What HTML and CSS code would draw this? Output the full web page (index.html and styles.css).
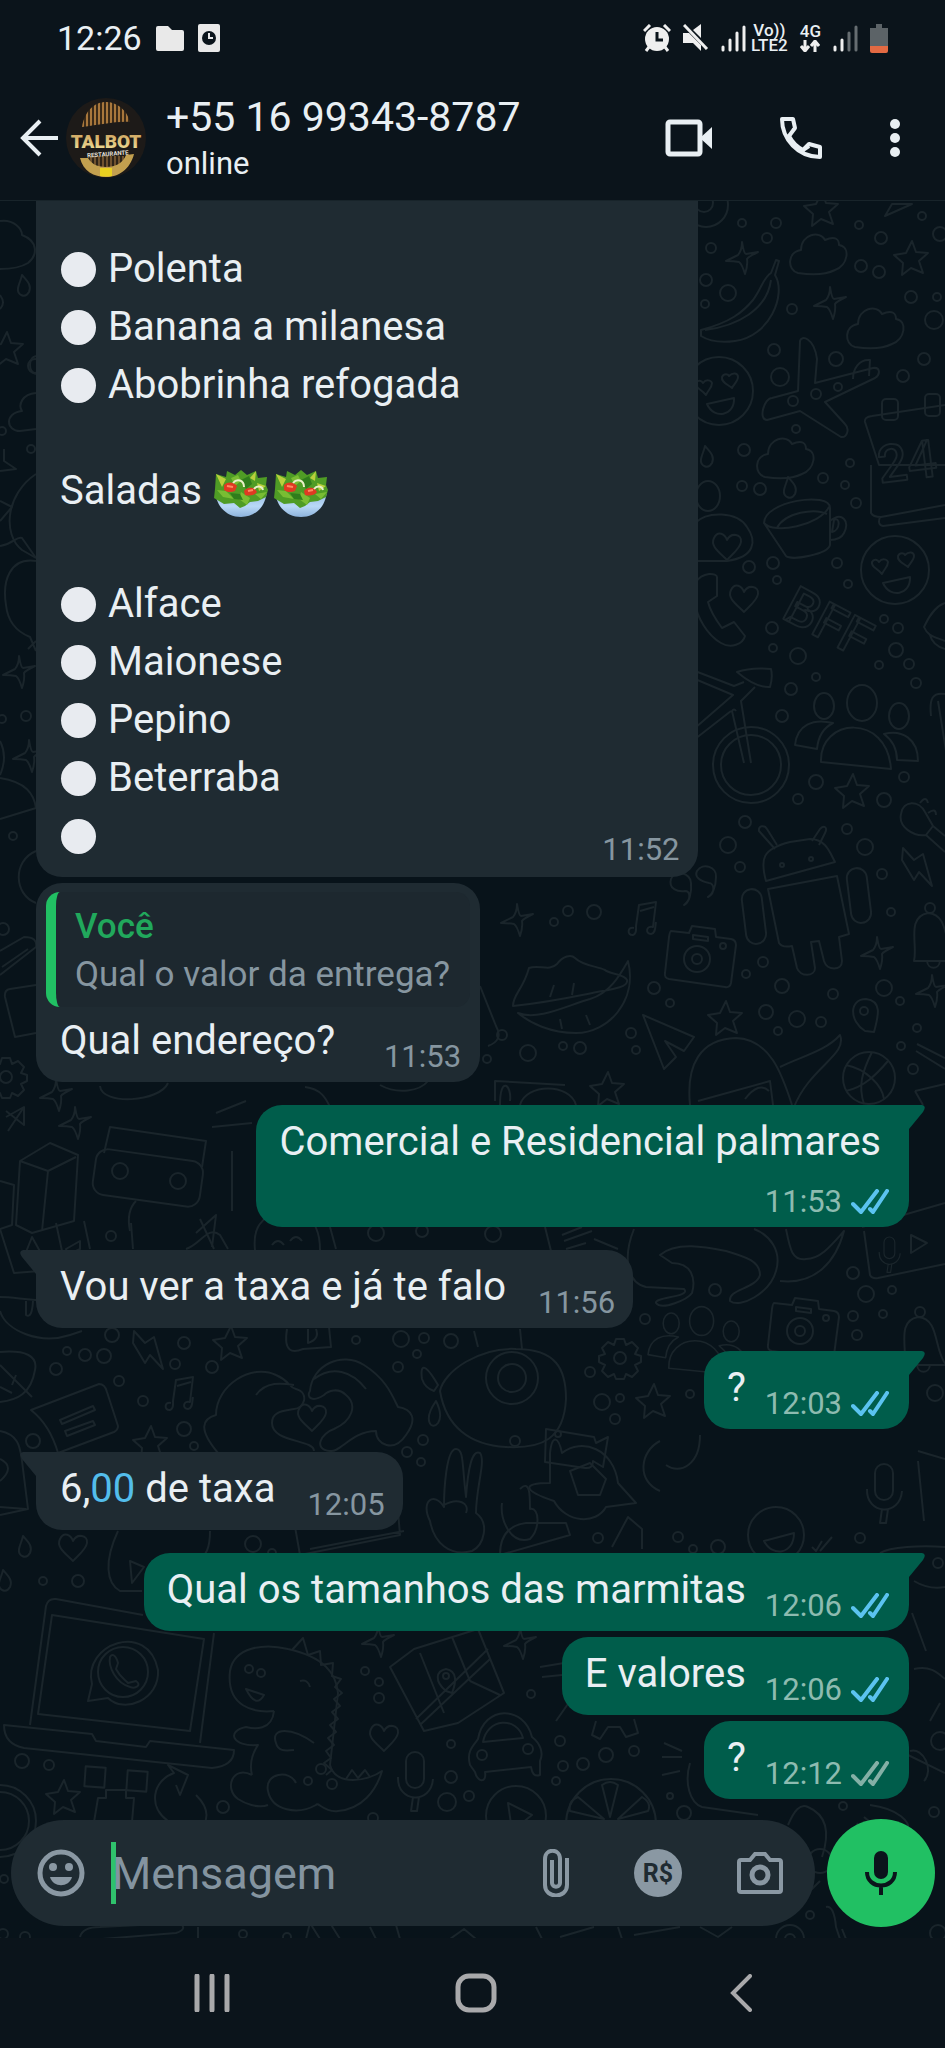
FILE: index.html
```html
<!DOCTYPE html>
<html lang="pt-BR">
<head>
  <meta charset="UTF-8" />
  <meta name="viewport" content="width=device-width, initial-scale=1.0"/>
  <title>+55 16 99343-8787</title>
  <link rel="stylesheet" href="styles.css">
</head>
<body>

<!-- Shared shapes -->
<svg class="defs" width="0" height="0" aria-hidden="true">
  <defs>
    <symbol id="ticks" viewBox="0 0 38 26">
      <path d="M2 15l8 8L26 2M19 20l3 3L36 2" fill="none" stroke="currentColor" stroke-width="4" stroke-linecap="round" stroke-linejoin="round"/>
    </symbol>
    <linearGradient id="bowl" x1="0" y1="0" x2="0" y2="1">
      <stop offset="0" stop-color="#8fb4dd"/><stop offset=".6" stop-color="#b9d9f6"/><stop offset="1" stop-color="#8db3dc"/>
    </linearGradient>
    <symbol id="salad" viewBox="0 0 54 48">
      <path d="M1 20C2 37 13 47 27 47S52 37 53 20z" fill="url(#bowl)"/>
      <path d="M1 19l1-15 10 3 1-6 8 4 6-5 6 5 9-4 2 7 9-1-1 8 2 5-2 7-8 4-8 1-5 4-5 2-6-5-10 1-10-6z" fill="#4f9c25"/>
      <path d="M2 4l10 5-4 8zM36 8l6-7-1 10zM43 13l9 3-7 5z" fill="#b9cf3d"/>
      <path d="M17 8l7-3 3 6-6 5zM27 22l9 6-3 7-8-6zM3 20l9 1 8 8-11-2zM41 24l12-2-6 7z" fill="#79bd33"/>
      <path d="M27 10l8-4 3 8-6 5zM16 23l10 1 3 6-9-1z" fill="#2f7d1c"/>
      <path d="M10 15c4-4 10-3 13 1l-2 5c-4 2-9 1-11-1zM30 21c3-4 8-4 11-2l2 3c-3 4-8 4-12 3z" fill="#df3a22"/>
      <path d="M13 16l6 1M34 21l5-1" stroke="#ff8a62" stroke-width="2"/>
      <path d="M19 13c4-5 11-3 11 4M40 19c3-4 8-3 9 1" fill="none" stroke="#e9f0c8" stroke-width="2"/>
    </symbol>

    <!-- Wallpaper doodles, drawn round 0,0 -->
    <path id="d-star" d="M2-17l4 11 12 1-9 8 4 12-12-5-9 7 1-12-9-8 12-2z"/>
    <path id="d-spark" d="M0-16q2 12 4 12l12-2q-10 5-11 7 1 6-2 15Q0 6-3 4q-5-1-13-1 10-5 12-6Q0-8 0-16z"/>
    <path id="d-cloud" d="M-20 18c-11-3-11-21 3-23 0-16 19-20 24-10 11-5 14 0 14 5 12 2 9 20-4 25-10 5-24 5-37 3z"/>
    <path id="d-heart" d="M0 14C-8 6-17 0-13-8-9-16-2-12 0-6c4-8 15-6 14 2C13 3 4 9 0 14z"/>
    <path id="d-drop" d="M-3-11c5 6 10 10 7 17-4 7-12 3-11-4 1-5 3-8 4-13z"/>
    <path id="d-note" d="M-9 12c-7-2-7 8-1 7 4-1 3-6 3-9l3-21 17-3-3 25c-7-2-8 7-2 7 5-1 4-7 5-12M-3-5l14-4"/>
    <path id="d-bolt" d="M-10-20l11 12 9-6 9 32-13-14-5 8-12-20z"/>
    <g id="d-love">
      <circle r="34"/>
      <path d="M-13 4c-5-6-11-7-10-12 2-4 6-2 7 0 3-4 8-3 9 0 0 5-4 7-6 12zM13-3C8-7 2-9 3-14c2-4 6-3 7-1 4-4 9-3 9 1s-4 7-6 11zM-12 13l27-6c1 18-20 22-27 6z"/>
    </g>
    <g id="d-people">
      <ellipse cx="3" cy="-25" rx="15" ry="18"/>
      <ellipse cx="-35" cy="-22" rx="10" ry="13"/>
      <ellipse cx="40" cy="-12" rx="10" ry="13"/>
      <path d="M-38 34c-2-44 66-50 70 7zM-42 21l-22-4c2-20 18-27 38-22-10 5-15 15-16 26zM38 32l21 1c0-22-16-32-34-27 8 6 13 14 13 26z"/>
    </g>
    <g id="d-camera">
      <path d="M-28-20l18 2 3-7 23 3 1 8 15 2q5 1 5 6l-5 38q-1 5-6 4l-56-8q-5-1-4-6l4-36q1-6 2-6zM-6-16l15 2v4l-15-2z"/>
      <circle cx="-2" cy="8" r="13"/><circle cx="-2" cy="8" r="5"/><circle cx="24" cy="-5" r="3"/>
    </g>
    <g id="d-gear">
      <path d="M-4-19h8l2 6 6-3 6 6-3 6 6 2v6l-6 3 3 6-6 6-6-3-2 5h-8l-2-5-6 3-6-6 3-6-6-3v-6l6-2-3-6 6-6 6 3z"/><circle r="6"/>
    </g>
    <g id="d-mic"><rect x="-9" y="-27" width="18" height="36" rx="9"/><path d="M-17-2c-1 26 33 28 35 2M-2 18l-2 14h6l2-14"/></g>
    <g id="d-bell"><path d="M-16 20c4-16-8-44 14-48 22 2 15 31 28 48zM-3 20c1 9 12 9 13 0"/><circle cx="0" cy="-33" r="5"/></g>
  </defs>
</svg>

<div class="phone">

  <div class="status-bar">
    <span class="clock">12:26</span>
    <svg width="28" height="25" viewBox="0 0 28 25"><path d="M2 0h10l4 4h10q2 0 2 2v17q0 2-2 2H2q-2 0-2-2V2q0-2 2-2z" fill="#e9e9e9"/></svg>
    <svg width="22" height="28" viewBox="0 0 22 28"><rect width="22" height="28" rx="2" fill="#e9e9e9"/><circle cx="11" cy="14" r="7" fill="#0b141b"/><path d="M11 9v5h4" fill="none" stroke="#e9e9e9" stroke-width="2"/></svg>

    <div class="status-icons">
      <svg width="28" height="28" viewBox="0 0 28 28">
        <circle cx="14" cy="15" r="12" fill="#efefef"/>
        <path d="M1 7l6-6M27 7l-6-6M6 23l-3 4M22 23l3 4" stroke="#efefef" stroke-width="3"/>
        <path d="M14 8v8h6" fill="none" stroke="#0b141b" stroke-width="3"/>
      </svg>
      <svg width="26" height="28" viewBox="0 0 26 28">
        <path d="M0 9h6l12 12v6l-8-8H0zM10 6l8-6v14z" fill="#efefef"/>
        <path d="M1 1l23 24" stroke="#efefef" stroke-width="3"/>
      </svg>
      <div class="carrier">
        <svg class="signal" width="25" height="27" viewBox="0 0 25 27"><path d="M2 22v3M9 15v10M16 8v17M23 2v23"/></svg>
        <span class="network">Vo))<br>LTE2</span>
      </div>
      <span class="network">4G
        <svg width="20" height="12" viewBox="0 0 20 12"><path d="M5 0v10M1 6l4 5 4-5M15 12V2M11 6l4-5 4 5" fill="none" stroke="#efefef" stroke-width="3"/></svg>
      </span>
      <svg class="signal" width="25" height="27" viewBox="0 0 25 27"><path d="M2 22v3M9 15v10"/><path class="off" d="M16 8v17M23 2v23"/></svg>
      <svg width="18" height="29" viewBox="0 0 18 29"><path d="M6 0h6v4h6v18H0V4h6z" fill="#5c6367"/><path d="M0 22h18v5q0 2-2 2H2q-2 0-2-2z" fill="#e36a43"/></svg>
    </div>
  </div>

  <header class="chat-header">
    <button class="icon-btn" aria-label="Voltar">
      <svg width="38" height="38" viewBox="0 0 38 38"><path d="M38 19H4M20 2L3 19l17 17" fill="none" stroke="currentColor" stroke-width="4"/></svg>
    </button>
    <svg class="avatar" width="80" height="80" viewBox="0 0 80 80" role="img" aria-label="Talbot Restaurante">
      <defs>
        <pattern id="stripes" width="4" height="80" patternUnits="userSpaceOnUse"><rect width="4" height="80" fill="#3a2a18"/><rect width="2" height="80" fill="#a8773c"/></pattern>
        <linearGradient id="gold" x1="0" y1="0" x2="0" y2="1"><stop offset="0" stop-color="#c99a55"/><stop offset="1" stop-color="#f4e7a0"/></linearGradient>
      </defs>
      <circle cx="40" cy="40" r="40" fill="#1d1a18"/>
      <path d="M16 29C19 12 29 4 40 4s21 8 24 20c-14-1-30 3-48 5z" fill="url(#stripes)"/>
      <path d="M22 58h36v12H22z" fill="url(#stripes)" opacity=".6"/>
      <path d="M14 60c3 13 14 19 26 19s24-7 28-23l-8 1c-3 8-10 12-20 12s-15-4-18-9z" fill="#c3a04f"/>
      <path d="M34 70h12v8q-6 1-12 0z" fill="#e8d020"/>
      <text x="40" y="50" class="logo-name">TALBOT</text>
      <text x="42" y="58" class="logo-sub" transform="rotate(-4 42 58)">RESTAURANTE</text>
    </svg>
    <div class="contact">
      <h1>+55 16 99343-8787</h1>
      <p>online</p>
    </div>
    <div class="header-actions">
      <button class="icon-btn" aria-label="Chamada de vídeo">
        <svg width="48" height="38" viewBox="0 0 48 38"><rect x="3" y="3" width="32" height="32" rx="2" fill="none" stroke="currentColor" stroke-width="5"/><path d="M35 19L47 8v22z" fill="currentColor"/></svg>
      </button>
      <button class="icon-btn" aria-label="Ligar">
        <svg width="42" height="42" viewBox="0 0 42 42"><path d="M2 2h11l2 9-6 8c3 6 8 11 14 14l6-6 11 3v10C18 40 2 22 2 2zM10 18l4-6M23 33l6-4" fill="none" stroke="currentColor" stroke-width="4" stroke-linejoin="round"/></svg>
      </button>
      <button class="icon-btn" aria-label="Mais opções">
        <svg width="12" height="38" viewBox="0 0 12 38" fill="currentColor"><circle cx="6" cy="5" r="5"/><circle cx="6" cy="19" r="5"/><circle cx="6" cy="33" r="5"/></svg>
      </button>
    </div>
  </header>

  <main class="chat">
    <svg class="wallpaper" viewBox="0 200 945 1738" preserveAspectRatio="xMidYMin slice" aria-hidden="true">
      <!-- right side, top -->
      <circle cx="706" cy="204" r="22"/><circle cx="704" cy="202" r="9"/>
      <use href="#d-star" x="820" y="208"/><use href="#d-star" x="910" y="257"/>
      <use href="#d-spark" x="742" y="257"/><use href="#d-spark" x="830" y="302"/>
      <use href="#d-cloud" x="818" y="254"/><use href="#d-cloud" x="875" y="328"/><use href="#d-cloud" x="785" y="458"/>
      <path d="M885 215l7-12h20zM771 272l5-13 3 1-4 14c12 20-6 62-40 66-14 2-26 0-34-5v-6c30-8 42-18 52-30 9-12 10-22 18-27zM705 329c32-4 62-20 66-50"/>
      <path d="M798 390l2-50c1-6 14-4 17 18l-2 24 58-15c7-1 8 6 2 10l-50 24 20 22c5 5 2 14-4 13l-41-26-33 9c-9 0-3-22 5-22zM853 378c0-10 6-20 17-19l-1 16"/>
      <use href="#d-love" x="719" y="390"/><use href="#d-love" x="895" y="569"/>
      <path d="M945 404l-73 11q-8 1-7 6l14 43h66M871 464v48q2 4 10 4l64-12M880 516q-3 8 3 9l62-8"/>
      <rect x="882" y="398" width="16" height="21" rx="4"/><rect x="925" y="393" width="15" height="22" rx="4"/>
      <text x="880" y="482" class="big" transform="rotate(-7 880 482)">24</text>
      <use href="#d-drop" x="708" y="456"/><use href="#d-drop" x="791" y="487"/>
      <ellipse cx="708" cy="495" rx="12" ry="15"/>
      <path d="M764 522c0-22 66-32 66-15v37c-2 9-38 16-44 11zc10 12 56 2 65-16M777 527c8-16 38-20 50-14M830 520c12-10 20 0 14 12-3 6-8 7-14 7M834 519c6-4 7 10-2 12z"/>
      <path d="M695 560h32c28-4 30-20 20-34-10-16-40-16-52-4"/>
      <use href="#d-heart" x="727" y="545"/><use href="#d-heart" x="744" y="597"/>
      <path d="M695 582c8-12 22-10 22-6v19l-9 6c2 8 8 18 14 26l12-6 11 14c-2 8-14 13-24 7-14-8-24-26-26-40"/>
      <text x="780" y="616" class="big" transform="rotate(28 780 616)">BFF</text>
      <path d="M945 602c-12 4-18 18-21 24 4 10 12 10 21 14M930 634c2 8 8 12 15 14"/>
      <!-- bike, people, android -->
      <circle cx="751" cy="764" r="38"/><circle cx="751" cy="764" r="30"/>
      <path d="M695 670l39 15 10-4M695 678l38 16-38 33M695 738l36-28M744 762l-12-52q2-3 4 0M751 762l-10-62 14-14M737 671q14-5 34-3 2 8-1 18-14 1-33-15z"/>
      <use href="#d-people" x="859" y="727"/>
      <use href="#d-star" x="851" y="790"/>
      <path d="M931 715c-2-18 2-24 14-22M938 700l8 50"/>
      <path d="M901 813c2-14 18-14 24-2l8 14-7 9c-12 2-28-8-25-21zM933 825l12 10M926 834l19 17M920 802q6-8 8 0M928 812q8-6 8 2"/>
      <use href="#d-bolt" x="913" y="867"/>
      <path d="M766 880c-6-22-4-32 24-39l20-3c16 0 20 14 25 23zM775 848l-16-18c-1-6 6-6 8-2l10 16M812 840l8-12c4-4 8-2 5 4l-6 12"/>
      <path d="M768 888l69-13 12 58-10 3 3 24c0 10-15 10-18 0l-5-20-8 1 4 26c0 9-15 9-18 0l-5-22q-10 2-13-3z"/>
      <rect x="744" y="888" width="20" height="55" rx="10" transform="rotate(-7 754 916)"/><rect x="849" y="867" width="20" height="55" rx="10" transform="rotate(-7 859 895)"/>
      <circle cx="782" cy="864" r="2"/><circle cx="811" cy="858" r="2"/>
      <path d="M684 904c8-6 6-14 1-14-7 1-17-2-14-12 4-10 20-6 20 4 1 10-2 20-7 22zM708 896c8-4 6-14 1-14-9-2-15-6-12-12 6-9 20-4 19 6 0 10-4 18-8 20z"/>
      <use href="#d-note" x="643" y="915"/><use href="#d-camera" x="699" y="950"/>
      <use href="#d-bell" x="930" y="940"/><use href="#d-spark" x="877" y="952"/><use href="#d-spark" x="932" y="990"/>
      <path d="M513 1005c0-12 10-16 16-38 10-4 20 4 28-4 6-8 14-10 18-6 8 8 22 8 30 12 4 4 20 4 22 10 2 8-20 10-30 12-30 6-46 10-84 14zM518 1012c20 8 50-8 72-14 20-6 30-24 38-38 10 40-20 72-52 72-26 0-46-10-58-20zM550 996l4-12M572 994l2-12M560 1018l2 10M586 1014l4 10"/>
      <use href="#d-spark" x="517" y="919"/>
      <path d="M643 1014l51 22-10 14-19-10 11 16-12 12zM865 1030c-16-10-16-32 1-32 17 2 12 18 8 33z"/><circle cx="864" cy="1010" r="4"/>
      <use href="#d-star" x="724" y="1017"/><use href="#d-star" x="606" y="1088"/>
      <circle cx="869" cy="1077" r="26"/><path d="M846 1064c20 4 36 20 38 34M872 1051c-10 20-14 34-8 52M846 1090c18-4 30-16 42-30"/>
      <path d="M690 1104c-4-40 10-66 46-67 34 1 46 36 56 67M698 1100l72-20 3 24M745 1098q14-18 24-8M780 1066c20-10 46-16 60-32 8 20-30 32-46 72M917 1043l28 14M916 1050l29 18M915 1090l30-7M915 1090l8 14"/>
      <path d="M480 985l16 40q8 14-8 20"/>
      <path d="M495 1100v-20l70 4M500 1104c0-30 12-20 10-4M520 1104c6-22 50-22 56 0"/>
      <!-- left side -->
      <path d="M0 220c14-2 22 8 22 14 16 6 16 20 6 28-8 5-18 6-28 6M0 294q6 8 0 14"/>
      <use href="#d-drop" x="25" y="285"/><use href="#d-star" x="5" y="348"/>
      <path d="M36 392c-14 1-18 12-14 18-18 2-16 20-2 20l16-2M36 355c-8 2-8 16 0 18"/>
      <path d="M0 470l16-2-12-8V448M36 473c-30 20-34 60-14 76l14 8M0 500l12 6-12 14"/>
      <path d="M0 545c14-2 16-10 22-8l14 20M36 560c-26-4-34 20-30 44 2 20 14 28 24 32l6 14M36 640l-8 8"/>
      <use href="#d-spark" x="19" y="671"/><use href="#d-spark" x="29" y="755"/>
      <path d="M0 740q8 16 0 34M0 777c26 4 34 16 36 30L0 818M36 850c-24 10-22 44 0 52"/>
      <path d="M0 950l24-14q14 0 12 10L0 974M2 966l26-18M36 984l-26 4q-6 1-5 8l10 40 21-4"/>
      <use href="#d-gear" x="6" y="1076"/>
      <!-- band beside the first sent bubble -->
      <use href="#d-spark" x="56" y="1094"/>
      <path d="M100 1085c2 20 60 16 68-3M305 1086c18 2 22 14 26 22M380 1084c18 10 40 6 48-4"/>
      <path d="M6 1116l18-10v18l-18-14M24 1106l-16 24M20 1160l30-18 28 12-4 66-42 12-16-8zM20 1160l28 10 28-14M48 1170l-6 60M0 1180l14 4-2 40-12 4"/>
      <rect x="94" y="1154" width="108" height="46" rx="12" transform="rotate(8 148 1176)"/><circle cx="120" cy="1170" r="8"/><circle cx="178" cy="1180" r="8"/>
      <path d="M104 1152l6-26 96 14-4 26M130 1230q-4-20 6-30M196 1232l20-18-4 32"/>
      <path d="M216 1112l30-12M212 1126l40-4M232 1150v60"/>
      <use href="#d-spark" x="75" y="1122"/>
      <path d="M0 1228l14 44 26-2M24 1256l8-20 10 18M66 1248l14-8v8l-12 6zM56 1222l6 28M84 1220l6 28M131 1222l2 26M200 1218l14 30M186 1248c14-4 22-24 34-14l8 14"/>
      <path d="M255 1249c-2-20 4-28 16-36M320 1249c0-20-6-30-16-36M272 1244q6-8 12 0M290 1240q6-8 12 0M330 1226l6 22"/>
      <!-- beside Vou ver -->
      <path d="M545 1226l6 24M562 1234l20-8M564 1240l28-10M566 1248l20-6M594 1238l24 10"/>
      <path d="M634 1228c-12 30-6 54 12 58l38 2c8 8-30 8-28 14 6 8 32-4 36-10 4-14 0-30-20-30l-12-8c16-14 46-8 66-4 20 6 34 10 34 24-4 14-32 14-30 26 10 8 40-8 46-30 6-20-6-36-22-42M786 1228c4 20 6 32 20 30 14 0 24-12 38-28-8 30-28 54-64 50"/>
      <path d="M864 1230l6 44q2 4 8 3l67-14M862 1226l83-24"/><use href="#d-mic" x="889" y="1252" transform="translate(356 501) scale(.6)"/><path d="M911 1234v18l16-10z"/>
      <use href="#d-people" x="699" y="1340" transform="translate(140 268) scale(.8)"/>
      <use href="#d-camera" x="802" y="1322"/><use href="#d-bell" x="920" y="1344"/>
      <!-- between the bubbles, lower half -->
      <path d="M0 1296c16 0 28 4 60 4h-22l42 20M0 1310c6 20 40 34 70 24l12-4M26 1300v14q6 4 7-14M0 1351c26-2 38 4 35 18-4 24-18 30-35 32M0 1364l32 32M12 1384l4-10M0 1386l12 6"/>
      <use href="#d-bolt" x="144" y="1350"/><use href="#d-star" x="229" y="1342"/>
      <path d="M287 1328c-4 24 6 24 16 20l28-2-2-20M308 1328v14q12-4 8-14"/>
      <path d="M31 1409l68-26q6 0 8 8l11 34q0 4-4 6l-56 21q-8-28-27-43zM60 1419l33-14 2 4-33 14zM65 1430l28-10 2 4-28 11z"/>
      <use href="#d-note" x="180" y="1390"/><use href="#d-star" x="149" y="1442"/>
      <path d="M218 1452c-20-24-16-34-2-38 0-30 36-52 60-40 14 6 12 12 20 14 14 4 8 20-2 20-10 2-22 2-22 14 0 20 42 16 42 28M256 1394c10-14 26-12 38-10M310 1390c2-26 32-40 54-26 22 14 28 30 34 42 14 2 20 12 8 28-12 18-30 10-30-4-24 0-36 22-46 20-18-2-8-18 4-22 18-8 24-24 12-34-8-8-18-4-22 0-12 8-18 2-14-4zM314 1378c18-14 38-8 52 10"/>
      <use href="#d-heart" x="312" y="1416"/>
      <path d="M440 1390c4-20 40-44 76-42 40 0 50 20 50 50-2 40-24 50-60 48-36-2-60-20-66-56zM438 1384c-14-24-18-20-16-6 2 6 6 10 12 12zM436 1400c-14 20-4 30 2 22 4-6 2-14-2-22zM474 1330l4 16M520 1328l2 20"/>
      <ellipse cx="512" cy="1377" rx="26" ry="26"/><ellipse cx="512" cy="1377" rx="14" ry="14"/>
      <use href="#d-gear" x="620" y="1357"/><use href="#d-star" x="652" y="1400"/>
      <path d="M546 1428l48 8 2 6 12-6-5 30-10-6q0 8-8 7l-40-6z"/><circle cx="558" cy="1433" r="3"/>
      <path d="M0 1430c20 4 20 18 22 30l6 48-28 6M0 1458q16 8 0 22M0 1506l26 2"/>
      <use href="#d-drop" x="26" y="1546"/><use href="#d-heart" x="73" y="1546"/><use href="#d-drop" x="6" y="1580"/>
      <path d="M118 1530c-14 30-12 52 2 60h22M210 1530c0 18-4 24-12 30M130 1560l14 6-12 16z"/>
      <path d="M430 1520c-10-20 4-30 14-14 0-16 2-58 12-58 8 0 6 16 10 48 2-28 6-48 14-44 6 8-4 34-4 60 14 10 8 32-4 38-22 6-38-8-42-30zM444 1504c14-8 26-2 22 8"/>
      <path d="M294 1520l6 34 100-20-2-24M310 1548l94-18M520 1488c10-10 10 6 10 20 10-2 10 20 0 30-20 6-30-20-28-36"/>
      <path d="M550 1452c2-18 8-18 12 0 20-16 52-4 56 30l18 20-30 4c-10 18-40 16-52-6-30-10-34-18-4-18zM570 1470l20-8 16 16-6 16-22 0z"/>
      <path d="M660 1440c-20 10-24 40 0 50M700 1434c0 30-20 40-34 30M500 1554c0-20 10-30 26-32l40 0 4 12zM612 1546l16-30 14 12v20"/>
      <circle cx="776" cy="1534" r="28"/><path d="M764 1540l30-8c0 22-22 24-30 8zM812 1546l4 4 6-10M820 1550l12-14"/>
      <use href="#d-mic" x="884" y="1490"/><path d="M918 1450l27 8M918 1460l6 60M880 1552c10-6 40-8 65-6M914 1580c10 6 20 8 31 6"/>
      <circle cx="938" cy="1562" r="5"/>
      <!-- laptop -->
      <path d="M46 1605q2-8 10-7l87 16M46 1605l-16 119M214 1632l-14 110M4 1724l88 9 4 7 50 6 4-6 84 9q0 16-22 18l-188-20q-20-4-20-23zM52 1614l152 24-14 92-152-17z"/>
      <path d="M88 1700l4-17c-10-40 56-64 66-14 2 30-34 44-50 28z"/><circle cx="123" cy="1671" r="25"/><path d="M110 1656c2-4 6-2 8 6l-2 6c4 8 8 10 12 14l8-2c6 4 0 8-6 6-14-4-22-20-20-30z"/>
      <!-- dinosaur -->
      <path d="M274 1710c-20 2-48-4-44-40 4-24 34-28 58-22 36 8 48 24 50 44l-8 72c6 22 38 16 52 6-6 20-20 38-44 40-14 2-20-10-22-6-18 10-44 6-48-14-4-18 22-22 28-8M274 1710c-2 20-20 18-28 16-20 4-14 20 12 18-8 12-8 22-6 30M252 1774c-20-10-28 14-14 24 6 4 20 10 30 6M314 1742c-22-16-44-16-38 0 2 8 8 8 18 7"/>
      <path d="M292 1649l11-12 5 17 12-4 1 14 12-2-1 13 9 3-6 8 7 6-8 6 6 7-8 6 6 7-8 6 6 7-8 6 6 7-8 6 5 7-7 5 8 7-6 5"/>
      <path d="M246 1688l18 6q-8 14-18-6zM300 1680q8-2 10 6M346 1778l6-9 6 8 7-8 5 7"/>
      <circle cx="249" cy="1668" r="4"/><circle cx="261" cy="1672" r="4"/>
      <!-- map, car, small things -->
      <path d="M390 1666l24-18 64-20 26 64-46 30-34 8zM416 1718l72-70M420 1724l70-66M420 1652l24 60M452 1636l18 44M470 1680l30 14M446 1690c-12-10-10-20 0-22 12 2 10 14 6 24z"/><circle cx="446" cy="1675" r="3"/>
      <use href="#d-spark" x="378" y="1640"/><use href="#d-spark" x="520" y="1642"/><use href="#d-heart" x="384" y="1736"/><use href="#d-mic" x="415" y="1778"/>
      <path d="M470 1764c-4-14 4-20 8-26 6-34 46-34 54-2 8 6 12 16 8 24v14c-6 2-8-2-9-8l-46 5c2 12-8 10-10 0zM483 1741c4-24 34-26 40-4z"/><circle cx="482" cy="1754" r="5"/><circle cx="528" cy="1748" r="5"/>
      <path d="M540 1666l24-4M542 1676l20-2M570 1700l-14 20M596 1720l-4 14 8 4 8-12 12 0 6 10 12-4-4-14M664 1742l18 8M662 1756h20M662 1774l18-4M690 1762c-6 20 0 40 12 44l56 8"/>
      <path d="M912 1612l14 38M914 1668c16-4 24 4 31 10M930 1720l10-18M910 1750c14-4 24 20 14 30M904 1752l41 20"/>
      <circle cx="516" cy="1815" r="30"/><path d="M508 1802l24 12-20 16z"/>
      <circle cx="611" cy="1823" r="45"/><path d="M610 1816l-8-32q8-6 16 0zM604 1818l-26-22q-10 4-8 14zM618 1818l24-22q10 6 6 14zM570 1822h80"/>
      <use href="#d-star" x="62" y="1796"/><rect x="85" y="1766" width="20" height="20" transform="rotate(4 95 1776)"/><rect x="127" y="1770" width="20" height="20" transform="rotate(4 137 1780)"/>
      <path d="M106 1789h20v8h8l-2 24H94l4-24h8zM168 1820c-20-14-16-40 6-48l-6-8 20 10-8 20-4-10M196 1794c14 14 14 26 0 40"/>
      <circle cx="0" cy="1820" r="36"/><circle cx="0" cy="1820" r="29"/>
      <path d="M788 1824c6-14 12-22 20-18 14 6 24 20 14 50M858 1822l-14 26M870 1804c30 4 40 18 38 24-10 4-34-2-44-12M820 1880l-20 20"/>
      <!-- below the composer -->
      <path d="M80 1936c2-8 10-10 20-10l80-4q8 6-4 10l-74 6M198 1926v12M306 1938l4-16 10 16M330 1922l10 16M370 1926l6 12M396 1924l4 14M450 1938l14-10 12 10M536 1926l6 12M560 1936l34-10M618 1926l4 12M634 1934l46-8M700 1926l18 10 14-10M826 1906q8-2 10 20l4 12M842 1928l4 10"/>
      <circle cx="790" cy="1938" r="14"/><circle cx="790" cy="1938" r="5"/>
      <!-- bubbles scattered over everything -->
      <circle cx="742" cy="222" r="4"/><circle cx="776" cy="222" r="5"/><circle cx="767" cy="237" r="5"/><circle cx="711" cy="247" r="5"/><circle cx="706" cy="279" r="6"/><circle cx="728" cy="292" r="8"/><circle cx="705" cy="303" r="4"/><circle cx="792" cy="308" r="5"/>
      <circle cx="859" cy="224" r="4"/><circle cx="881" cy="237" r="6"/><circle cx="922" cy="215" r="4"/><circle cx="861" cy="265" r="6"/><circle cx="879" cy="271" r="6"/><circle cx="911" cy="296" r="6"/><circle cx="937" cy="296" r="4"/><circle cx="934" cy="319" r="9"/><circle cx="940" cy="233" r="7"/>
      <circle cx="774" cy="349" r="6"/><circle cx="780" cy="376" r="9"/><circle cx="836" cy="358" r="7"/><circle cx="793" cy="400" r="5"/><circle cx="816" cy="393" r="5"/><circle cx="838" cy="386" r="4"/><circle cx="924" cy="358" r="6"/><circle cx="903" cy="375" r="6"/>
      <circle cx="796" cy="428" r="4"/><circle cx="744" cy="449" r="6"/><circle cx="742" cy="485" r="5"/><circle cx="760" cy="488" r="6"/><circle cx="823" cy="477" r="5"/><circle cx="850" cy="462" r="4"/><circle cx="845" cy="484" r="4"/><circle cx="856" cy="502" r="5"/>
      <circle cx="749" cy="566" r="6"/><circle cx="773" cy="562" r="6"/><circle cx="837" cy="562" r="5"/><circle cx="777" cy="579" r="4"/><circle cx="848" cy="583" r="4"/><circle cx="772" cy="627" r="6"/><circle cx="884" cy="618" r="4"/><circle cx="898" cy="627" r="5"/><circle cx="896" cy="649" r="7"/>
      <circle cx="773" cy="647" r="4"/><circle cx="798" cy="655" r="8"/><circle cx="816" cy="676" r="4"/><circle cx="791" cy="688" r="6"/><circle cx="782" cy="715" r="6"/><circle cx="879" cy="664" r="4"/><circle cx="909" cy="663" r="5"/><circle cx="916" cy="682" r="5"/>
      <circle cx="816" cy="781" r="7"/><circle cx="798" cy="798" r="5"/><circle cx="884" cy="799" r="7"/><circle cx="904" cy="776" r="5"/><circle cx="745" cy="821" r="6"/><circle cx="728" cy="844" r="8"/><circle cx="740" cy="866" r="5"/><circle cx="847" cy="828" r="5"/><circle cx="865" cy="846" r="8"/><circle cx="882" cy="873" r="5"/><circle cx="891" cy="911" r="4"/>
      <circle cx="763" cy="961" r="5"/><circle cx="746" cy="973" r="4"/><circle cx="782" cy="985" r="7"/><circle cx="833" cy="993" r="5"/><circle cx="884" cy="987" r="8"/><circle cx="900" cy="1000" r="4"/><circle cx="766" cy="1011" r="7"/><circle cx="797" cy="1018" r="8"/><circle cx="821" cy="1021" r="5"/><circle cx="778" cy="1030" r="4"/><circle cx="654" cy="987" r="6"/><circle cx="670" cy="1002" r="4"/><circle cx="631" cy="1032" r="5"/><circle cx="636" cy="1049" r="4"/><circle cx="917" cy="1027" r="4"/><circle cx="901" cy="1045" r="4"/><circle cx="913" cy="1068" r="5"/>
      <circle cx="568" cy="910" r="5"/><circle cx="594" cy="911" r="7"/><circle cx="554" cy="921" r="4"/><circle cx="502" cy="1034" r="5"/><circle cx="528" cy="1052" r="8"/><circle cx="563" cy="1045" r="4"/><circle cx="580" cy="1047" r="6"/><circle cx="487" cy="1058" r="4"/>
      <circle cx="35" cy="365" r="7"/><circle cx="31" cy="448" r="4"/><circle cx="2" cy="430" r="4"/><circle cx="26" cy="715" r="5"/><circle cx="2" cy="718" r="4"/><circle cx="13" cy="835" r="4"/><circle cx="3" cy="928" r="6"/>
      <circle cx="111" cy="1235" r="5"/><circle cx="112" cy="1334" r="7"/><circle cx="67" cy="1350" r="4"/><circle cx="85" cy="1354" r="6"/><circle cx="104" cy="1355" r="7"/><circle cx="56" cy="1368" r="6"/><circle cx="119" cy="1380" r="5"/><circle cx="184" cy="1342" r="6"/><circle cx="175" cy="1363" r="5"/><circle cx="212" cy="1366" r="6"/><circle cx="143" cy="1400" r="5"/><circle cx="184" cy="1428" r="7"/><circle cx="194" cy="1445" r="4"/><circle cx="33" cy="1440" r="7"/>
      <circle cx="356" cy="1339" r="4"/><circle cx="401" cy="1338" r="8"/><circle cx="424" cy="1337" r="5"/><circle cx="451" cy="1340" r="7"/><circle cx="417" cy="1353" r="4"/><circle cx="398" cy="1366" r="5"/><circle cx="423" cy="1439" r="5"/><circle cx="407" cy="1451" r="5"/><circle cx="421" cy="1461" r="4"/>
      <circle cx="376" cy="1232" r="8"/><circle cx="422" cy="1230" r="6"/><circle cx="493" cy="1233" r="8"/><circle cx="645" cy="1318" r="5"/><circle cx="715" cy="1289" r="6"/><circle cx="853" cy="1272" r="6"/><circle cx="866" cy="1293" r="8"/><circle cx="892" cy="1289" r="4"/><circle cx="853" cy="1315" r="5"/><circle cx="883" cy="1313" r="4"/><circle cx="857" cy="1334" r="5"/><circle cx="590" cy="1371" r="5"/><circle cx="602" cy="1401" r="8"/><circle cx="620" cy="1397" r="4"/><circle cx="615" cy="1418" r="5"/><circle cx="690" cy="1393" r="4"/><circle cx="515" cy="1440" r="5"/><circle cx="935" cy="1392" r="8"/>
      <circle cx="253" cy="1543" r="8"/><circle cx="272" cy="1552" r="4"/><circle cx="43" cy="1580" r="4"/><circle cx="78" cy="1580" r="6"/><circle cx="598" cy="1537" r="5"/><circle cx="678" cy="1536" r="5"/><circle cx="693" cy="1548" r="4"/><circle cx="718" cy="1546" r="7"/><circle cx="860" cy="1537" r="5"/>
      <circle cx="22" cy="1760" r="7"/><circle cx="49" cy="1764" r="5"/><circle cx="321" cy="1768" r="5"/><circle cx="308" cy="1780" r="4"/><circle cx="332" cy="1783" r="5"/><circle cx="365" cy="1670" r="4"/><circle cx="379" cy="1681" r="4"/><circle cx="379" cy="1697" r="5"/><circle cx="531" cy="1693" r="4"/><circle cx="451" cy="1743" r="4"/><circle cx="451" cy="1776" r="6"/><circle cx="447" cy="1801" r="9"/><circle cx="469" cy="1795" r="5"/><circle cx="223" cy="1806" r="6"/><circle cx="373" cy="1817" r="5"/>
      <circle cx="560" cy="1740" r="5"/><circle cx="563" cy="1765" r="5"/><circle cx="583" cy="1763" r="6"/><circle cx="606" cy="1754" r="7"/><circle cx="634" cy="1750" r="5"/><circle cx="556" cy="1780" r="4"/><circle cx="670" cy="1795" r="3"/><circle cx="684" cy="1812" r="7"/><circle cx="843" cy="1805" r="4"/><circle cx="934" cy="1811" r="5"/><circle cx="940" cy="1740" r="9"/>
      <circle cx="4" cy="1878" r="4"/><circle cx="3" cy="1933" r="5"/><circle cx="25" cy="1936" r="5"/><circle cx="243" cy="1933" r="4"/><circle cx="287" cy="1936" r="4"/><circle cx="810" cy="1914" r="4"/><circle cx="938" cy="1932" r="8"/><circle cx="820" cy="1860" r="12"/>
    </svg>

    <div class="messages">
      <article class="msg in long">
        <ul>
          <li>Polenta</li>
          <li>Banana a milanesa</li>
          <li>Abobrinha refogada</li>
        </ul>
        <p class="menu-title">Saladas <svg class="emoji" role="img" aria-label="salada"><use href="#salad"/></svg><svg class="emoji" role="img" aria-label="salada"><use href="#salad"/></svg></p>
        <ul>
          <li>Alface</li>
          <li>Maionese</li>
          <li>Pepino</li>
          <li>Beterraba</li>
          <li><time>11:52</time></li>
        </ul>
      </article>

      <article class="msg in reply">
        <blockquote class="quote">
          <strong>Você</strong>
          <p>Qual o valor da entrega?</p>
        </blockquote>
        <div class="reply-body">
          <p class="text">Qual endereço?</p>
          <time>11:53</time>
        </div>
      </article>

      <article class="msg out tail stacked">
        <p class="text">Comercial e Residencial palmares</p>
        <div class="meta"><time>11:53</time><svg class="ticks read"><use href="#ticks"/></svg></div>
      </article>

      <article class="msg in tail">
        <p class="text">Vou ver a taxa e já te falo</p>
        <time>11:56</time>
      </article>

      <article class="msg out tail">
        <p class="text">?</p>
        <div class="meta"><time>12:03</time><svg class="ticks read"><use href="#ticks"/></svg></div>
      </article>

      <article class="msg in tail">
        <p class="text">6,<a href="#">00</a> de taxa</p>
        <time>12:05</time>
      </article>

      <article class="msg out tail">
        <p class="text">Qual os tamanhos das marmitas</p>
        <div class="meta"><time>12:06</time><svg class="ticks read"><use href="#ticks"/></svg></div>
      </article>

      <article class="msg out">
        <p class="text">E valores</p>
        <div class="meta"><time>12:06</time><svg class="ticks read"><use href="#ticks"/></svg></div>
      </article>

      <article class="msg out">
        <p class="text">?</p>
        <div class="meta"><time>12:12</time><svg class="ticks"><use href="#ticks"/></svg></div>
      </article>
    </div>

    <form class="composer">
      <div class="composer-box">
        <button type="button" class="icon-btn" aria-label="Emojis">
          <svg width="48" height="48" viewBox="0 0 48 48"><circle cx="24" cy="24" r="21" fill="none" stroke="currentColor" stroke-width="5"/><circle cx="16" cy="18" r="4" fill="currentColor"/><circle cx="32" cy="18" r="4" fill="currentColor"/><path d="M13 28h22c-3 11-19 11-22 0z" fill="currentColor"/></svg>
        </button>
        <span class="caret"></span>
        <input type="text" placeholder="Mensagem" aria-label="Mensagem">
        <button type="button" class="icon-btn" aria-label="Anexar">
          <svg width="26" height="48" viewBox="0 0 26 48"><path d="M24 9v27c0 14-22 14-22 0V10C2-1 17-1 17 10v24c0 5-8 5-8 0V11" fill="none" stroke="currentColor" stroke-width="4"/></svg>
        </button>
        <button type="button" class="icon-btn pay" aria-label="Pagamento">R$</button>
        <button type="button" class="icon-btn" aria-label="Câmera">
          <svg width="46" height="42" viewBox="0 0 46 42" fill="none" stroke="currentColor"><path d="M4 8h9l5-6h10l5 6h9q2 0 2 2v28q0 2-2 2H4q-2 0-2-2V10q0-2 2-2z" stroke-width="4"/><circle cx="23" cy="23" r="8" stroke-width="5"/></svg>
        </button>
      </div>
      <button type="button" class="mic" aria-label="Gravar áudio">
        <svg width="32" height="44" viewBox="0 0 32 44"><rect x="9" y="0" width="14" height="28" rx="7" fill="currentColor"/><path d="M2 21c0 18 28 18 28 0M16 34v10" fill="none" stroke="currentColor" stroke-width="4"/></svg>
      </button>
    </form>
  </main>

  <nav class="system-nav">
    <button aria-label="Recentes"><svg width="36" height="38" viewBox="0 0 36 38"><path d="M3 2v34M18 2v34M33 2v34" stroke="currentColor" stroke-width="5" stroke-linecap="round"/></svg></button>
    <button aria-label="Início"><svg width="42" height="40" viewBox="0 0 42 40"><rect x="3" y="3" width="36" height="34" rx="11" fill="none" stroke="currentColor" stroke-width="5"/></svg></button>
    <button aria-label="Voltar"><svg width="22" height="38" viewBox="0 0 22 38"><path d="M20 2L3 19l17 17" fill="none" stroke="currentColor" stroke-width="4" stroke-linecap="round"/></svg></button>
  </nav>

</div>

</body>
</html>
```
FILE: styles.css
```css
* {
  box-sizing: border-box;
}
body {
  margin: 0;
  font-family: Roboto, "Liberation Sans", sans-serif;
  background: #0b141b;
  color: #e9eff3;
}
h1, p, ul, blockquote {
  margin: 0;
  padding: 0;
}
svg {
  display: block;
  flex-shrink: 0;
}
button {
  padding: 0;
  border: none;
  background: none;
  color: inherit;
  font-family: inherit;
  cursor: pointer;
}
.defs {
  position: absolute;
}
.phone {
  height: 100vh;
  display: flex;
  flex-direction: column;
}

/* Status bar */
.status-bar {
  height: 76px;
  padding: 0 57px;
  display: flex;
  align-items: center;
  flex-shrink: 0;
  gap: 14px;
}
.clock {
  font-size: 34px;
}
.status-icons {
  display: flex;
  align-items: center;
  gap: 12px;
  margin-left: auto;
}
.carrier {
  display: flex;
  align-items: center;
  gap: 5px;
}
.network {
  font-size: 17px;
  font-weight: 500;
  line-height: 15px;
  text-align: center;
}
.network svg {
  margin: 1px auto 0;
}
.signal {
  stroke: #efefef;
  stroke-width: 3;
  stroke-linecap: round;
}
.signal .off {
  stroke: #666d71;
}

/* Header */
.chat-header {
  height: 124px;
  padding: 0 44px 0 20px;
  display: flex;
  align-items: center;
  flex-shrink: 0;
}
.icon-btn {
  display: flex;
  align-items: center;
  justify-content: center;
  flex-shrink: 0;
}
.avatar {
  margin: 0 20px 0 8px;
}
.logo-name {
  font-size: 19px;
  font-weight: 900;
  text-anchor: middle;
  fill: url(#gold);
}
.logo-sub {
  font-size: 6px;
  font-weight: 700;
  text-anchor: middle;
  fill: #e6e0d8;
}
.contact {
  flex: 1;
}
.contact h1 {
  font-size: 41px;
  font-weight: 400;
  line-height: 50px;
}
.contact p {
  margin-top: 2px;
  font-size: 31px;
  line-height: 40px;
}
.header-actions {
  display: flex;
  align-items: center;
  gap: 67px;
}

/* Chat */
.chat {
  flex: 1;
  min-height: 0;
  position: relative;
  display: flex;
  flex-direction: column;
  overflow: hidden;
  background: #08131a;
  border-top: 1px solid #18242a;
}
.wallpaper {
  position: absolute;
  top: 0;
  left: 0;
  width: 100%;
  height: 100%;
  fill: none;
  stroke: #1a252b;
  stroke-width: 2;
  stroke-linejoin: round;
}
.wallpaper .big {
  font-size: 52px;
  font-weight: 500;
}
.messages {
  flex: 1;
  min-height: 0;
  position: relative;
  padding: 0 36px 20px;
  display: flex;
  flex-direction: column;
  justify-content: flex-end;
  align-items: flex-start;
  overflow: hidden;
}
.msg {
  position: relative;
  display: flex;
  align-items: flex-end;
  flex-shrink: 0;
  gap: 32px;
  margin-top: 6px;
  padding: 13px 18px 7px 24px;
  border-radius: 26px;
  background: #1f2b32;
  font-size: 40px;
  line-height: 48px;
}
.msg.out {
  align-self: flex-end;
  gap: 19px;
  padding-right: 20px;
  padding-left: 23px;
  background: #005d4b;
}
.msg.tail {
  margin-top: 23px;
}
.msg.in.tail {
  border-top-left-radius: 0;
}
.msg.out.tail {
  border-top-right-radius: 0;
}
.msg.tail::before {
  content: "";
  position: absolute;
  top: 0;
  width: 16px;
  height: 24px;
  background: inherit;
}
.msg.in.tail::before {
  right: 100%;
  clip-path: path("M16 0H3Q-2 1 2 7L16 24Z");
}
.msg.out.tail::before {
  left: 100%;
  clip-path: path("M0 0H13Q18 1 14 7L0 24Z");
}
.msg .text {
  margin-bottom: 10px;
}
.msg a {
  color: #53bdeb;
  text-decoration: none;
}
time {
  color: #8696a0;
  font-size: 31px;
  line-height: 36px;
}
.meta {
  display: flex;
  align-items: center;
  gap: 9px;
}
.out time {
  color: #8dbbb0;
}
.ticks {
  width: 38px;
  height: 26px;
  color: #84b0a6;
}
.ticks.read {
  color: #5bc3f0;
}
.msg.stacked {
  flex-direction: column;
  gap: 8px;
}
.msg.stacked .text {
  padding-right: 8px;
}

/* Menu message */
.msg.long {
  display: block;
  width: 70vw;
  padding-top: 40px;
  padding-bottom: 12px;
  border-radius: 0 0 26px 26px;
  line-height: 58px;
}
.msg ul {
  list-style: none;
}
.msg li {
  display: flex;
  align-items: center;
  height: 58px;
  gap: 12px;
}
.msg li::before {
  content: "";
  width: 35px;
  height: 35px;
  margin-left: 1px;
  border-radius: 50%;
  background: #e8ebf0;
}
.msg li time {
  margin: 28px 0 0 auto;
}
.menu-title {
  display: flex;
  align-items: center;
  gap: 6px;
  margin: 48px 0 55px;
}
.emoji {
  width: 54px;
  height: 48px;
  margin-top: 6px;
}
.emoji:first-child {
  margin-left: 6px;
}

/* Reply message */
.msg.reply {
  display: block;
  padding: 9px 10px 7px;
}
.quote {
  padding: 11px 20px 8px 19px;
  border-left: 10px solid #21c063;
  border-radius: 14px;
  background: #1d282f;
  font-size: 35px;
}
.quote strong {
  color: #21a85c;
  font-weight: 500;
}
.quote p {
  color: #8696a0;
}
.reply-body {
  display: flex;
  align-items: flex-end;
  justify-content: space-between;
  padding: 10px 9px 0 14px;
}

/* Composer */
.composer {
  position: relative;
  display: flex;
  align-items: center;
  gap: 12px;
  padding: 0 10px 11px 11px;
}
.composer-box {
  flex: 1;
  min-width: 0;
  height: 106px;
  padding: 0 32px 0 26px;
  display: flex;
  align-items: center;
  border-radius: 53px;
  background: #1f2b32;
  color: #8a98a3;
}
.caret {
  width: 5px;
  height: 62px;
  margin: 0 -4px 0 26px;
  background: #2fc26c;
}
.composer input {
  flex: 1;
  min-width: 0;
  padding: 0;
  border: none;
  outline: none;
  background: none;
  color: #e9eff3;
  font-family: inherit;
  font-size: 45px;
}
.composer input::placeholder {
  color: #8494a0;
}
.composer .pay {
  width: 48px;
  height: 48px;
  margin: 0 55px 0 65px;
  border-radius: 50%;
  background: #8a98a3;
  color: #1f2b32;
  font-size: 25px;
  font-weight: 700;
}
.mic {
  width: 108px;
  height: 108px;
  display: flex;
  align-items: center;
  justify-content: center;
  flex-shrink: 0;
  border-radius: 50%;
  background: #21c063;
  color: #0b141b;
}

/* Android navigation */
.system-nav {
  height: 110px;
  padding: 0 72px 0 80px;
  display: flex;
  flex-shrink: 0;
  color: #a9a9ab;
}
.system-nav button {
  flex: 1;
  display: flex;
  align-items: center;
  justify-content: center;
}
```
